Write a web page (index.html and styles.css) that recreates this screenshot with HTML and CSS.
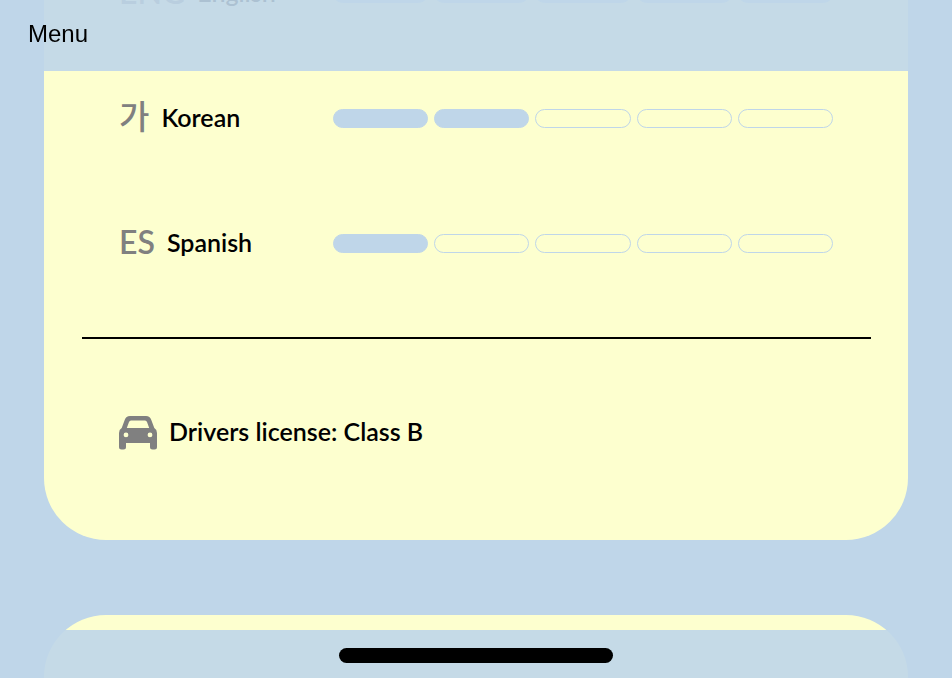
FILE: index.html
```html
<!DOCTYPE html>
<html lang="en">
<head>
<meta charset="utf-8">
<meta name="viewport" content="width=device-width, initial-scale=1">
<title>Languages</title>
<link rel="stylesheet" href="styles.css">
</head>
<body>
<header class="topbar"><button class="menu" type="button">Menu</button></header>
<main class="cards">
  <section class="card">
    <div class="row">
      <div class="label"><span class="mark">ENG</span><span class="name">English</span></div>
      <div class="level"><i class="pip full"></i><i class="pip full"></i><i class="pip full"></i><i class="pip full"></i><i class="pip full"></i></div>
    </div>
    <div class="row">
      <div class="label"><span class="mark korean" lang="ko">가</span><span class="name">Korean</span></div>
      <div class="level"><i class="pip full"></i><i class="pip full"></i><i class="pip"></i><i class="pip"></i><i class="pip"></i></div>
    </div>
    <div class="row">
      <div class="label"><span class="mark">ES</span><span class="name">Spanish</span></div>
      <div class="level"><i class="pip full"></i><i class="pip"></i><i class="pip"></i><i class="pip"></i><i class="pip"></i></div>
    </div>
    <hr class="rule">
    <div class="row license">
      <div class="label">
        <svg class="car" viewBox="0 0 38 34" aria-hidden="true"><path fill-rule="evenodd" d="M11 0H27Q31 0 32.300 4L35.300 12Q38 13.500 38 17V31Q38 33.500 35.500 33.500H33.500Q31 33.500 31 31V27H7V31Q7 33.500 4.500 33.500H2.500Q0 33.500 0 31V17Q0 13.500 2.700 12L5.700 4Q7 0 11 0ZM12 4.500Q10.500 4.500 10 6L7.800 12H30.200L28 6Q27.500 4.500 26 4.500ZM7 16.500A2.400 2.400 0 1 0 7 21.300A2.400 2.400 0 1 0 7 16.500ZM31 16.500A2.400 2.400 0 1 0 31 21.300A2.400 2.400 0 1 0 31 16.500Z"/></svg>
        <span class="name">Drivers license: Class B</span>
      </div>
    </div>
  </section>
  <section class="card next"></section>
</main>
<footer class="bottombar"><div class="home"></div></footer>
</body>
</html>
```
FILE: styles.css
```css
* { box-sizing: border-box; }
body {
  margin: 0;
  height: 100vh;
  overflow: hidden;
  background: #bfd6e9;
  font-family: Lato, "Noto Sans", "Noto Sans CJK KR", sans-serif;
  color: #000;
}
.topbar, .bottombar {
  position: fixed;
  left: 0;
  right: 0;
  z-index: 1;
  display: flex;
  align-items: center;
  background: rgba(191, 214, 233, 0.9);
}
.topbar { top: 0; height: 71px; padding: 0 28px 4px; }
.bottombar { bottom: 0; height: 48px; padding-top: 2px; justify-content: center; }
.menu {
  padding: 0;
  border: 0;
  background: none;
  color: #000;
  font: 24px "Liberation Sans", sans-serif;
}
.home { width: 274px; height: 15px; border-radius: 8px; background: #000; }
.cards {
  display: flex;
  flex-direction: column;
  gap: 75px;
  margin-top: -69px;
  padding: 0 44px;
}
.card { padding: 0 37px 45px 38px; border-radius: 62px; background: #fdffcf; }
.card:first-child { border-top-left-radius: 0; border-top-right-radius: 0; }
.next { min-height: 400px; }
.row {
  display: grid;
  grid-template-columns: 214px 1fr;
  align-items: center;
  height: 125px;
  padding: 0 38px 0 37px;
}
.license { grid-template-columns: 1fr; }
.label { display: flex; align-items: center; gap: 12px; white-space: nowrap; }
.mark { padding-bottom: 4px; color: #808080; font-size: 32px; font-weight: 600; line-height: 40px; }
.korean { font-family: "Noto Sans CJK KR", sans-serif; font-size: 33px; font-weight: 500; padding-bottom: 8px; }
.name { padding-bottom: 3px; font-size: 25px; font-weight: 600; line-height: 32px; }
.car { width: 38px; height: 34px; fill: #808080; }
.level { display: grid; grid-template-columns: repeat(5, 1fr); gap: 6px; }
.pip { height: 19px; border: 1px solid #bfd6e9; border-radius: 10px; }
.full { background: #bfd6e9; }
.rule { height: 2px; margin: 31px 0; border: 0; background: #000; }
```
